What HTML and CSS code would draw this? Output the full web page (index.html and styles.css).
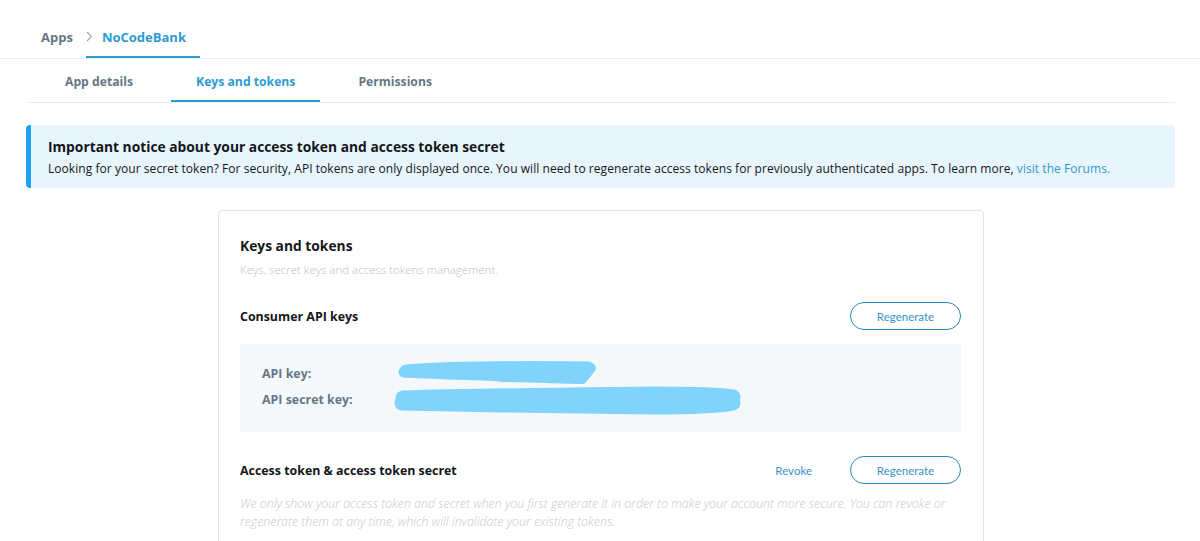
FILE: index.html
```html
<!DOCTYPE html>
<html lang="en">
<head>
<meta charset="utf-8">
<title>Keys and tokens</title>
<link rel="stylesheet" href="styles.css">
</head>
<body>
<header class="topbar">
  <nav class="crumbs">
    <a class="crumb">Apps</a>
    <a class="crumb crumb-active"><span class="chev">
      <svg width="7" height="11" viewBox="0 0 7 11"><path d="M1 1 L5.5 5.5 L1 10" fill="none" stroke="#9aa5ad" stroke-width="1.1"/></svg>
    </span>NoCodeBank</a>
  </nav>
</header>
<main class="main">
  <nav class="tabs">
    <a class="tab">App details</a>
    <a class="tab tab-active">Keys and tokens</a>
    <a class="tab">Permissions</a>
  </nav>

  <section class="notice">
    <h2 class="notice-title">Important notice about your access token and access token secret</h2>
    <p class="notice-text">Looking for your secret token? For security, API tokens are only displayed once. You will need to regenerate access tokens for previously authenticated apps. To learn more, <a class="link">visit the Forums.</a></p>
  </section>

  <section class="card">
    <h3 class="card-title">Keys and tokens</h3>
    <p class="card-sub">Keys, secret keys and access tokens management.</p>

    <div class="row">
      <h4 class="row-title">Consumer API keys</h4>
      <div class="actions">
        <button class="btn">Regenerate</button>
      </div>
    </div>

    <div class="keybox">
      <div class="keyrow">
        <span class="keylabel">API key:</span>
        <svg class="scribble s1" width="210" height="26" viewBox="0 0 210 26">
          <path d="M10 9 C 50 6, 120 5, 192 6" fill="none" stroke="#80d3fb" stroke-width="13" stroke-linecap="round"/>
          <path d="M8 10 C 60 13, 90 12, 104 14" fill="none" stroke="#80d3fb" stroke-width="11" stroke-linecap="round"/>
          <path d="M106 15 C 140 15, 165 17, 186 17 L 195 6" fill="none" stroke="#80d3fb" stroke-width="10" stroke-linecap="round" stroke-linejoin="round"/>
        </svg>
      </div>
      <div class="keyrow">
        <span class="keylabel">API secret key:</span>
        <svg class="scribble s2" width="352" height="28" viewBox="0 0 352 28">
          <path d="M11 12 C 80 10, 180 9, 260 8 C 300 8, 330 9, 341 11" fill="none" stroke="#80d3fb" stroke-width="15" stroke-linecap="round"/>
          <path d="M10 17 C 90 19, 200 20, 260 21 C 300 21, 330 19, 341 17" fill="none" stroke="#80d3fb" stroke-width="15" stroke-linecap="round"/>
        </svg>
      </div>
    </div>

    <div class="row row-access">
      <h4 class="row-title">Access token &amp; access token secret</h4>
      <div class="actions">
        <a class="textbtn">Revoke</a>
        <button class="btn">Regenerate</button>
      </div>
    </div>
    <p class="hint">We only show your access token and secret when you first generate it in order to make your account more secure. You can revoke or regenerate them at any time, which will invalidate your existing tokens.</p>
  </section>
</main>
</body>
</html>
```

FILE: styles.css
```css
* { box-sizing: border-box; }
html, body { margin: 0; padding: 0; background: #fff; }
body {
  font-family: "Open Sans", "Noto Sans", sans-serif;
  color: #14171a;
  overflow: hidden;
  height: 541px;
}
a { text-decoration: none; cursor: pointer; }

.topbar {
  height: 59px;
  border-bottom: 1px solid #e9edf0;
}
.crumbs {
  display: flex;
  align-items: stretch;
  height: 58px;
  padding-left: 41px;
}
.crumb {
  display: flex;
  align-items: center;
  font-size: 13px;
  font-weight: 700;
  color: #657786;
  padding-top: 17px;
  padding-bottom: 2px;
}
.crumb-active {
  margin-left: 13px;
  padding: 17px 14px 0 0;
  color: #2d9bd3;
  border-bottom: 2px solid #2d9bd3;
}
.chev { display: inline-flex; width: 16px; }

.main {
  margin: 0 25px 0 27px;
}
.tabs {
  display: flex;
  gap: 13px;
  padding-left: 13px;
  height: 44px;
  border-bottom: 1px solid #e9edf0;
}
.tab {
  display: flex;
  align-items: center;
  padding: 3px 25px 0;
  font-size: 12.2px;
  font-weight: 700;
  color: #657786;
  border-bottom: 2px solid transparent;
}
.tab-active {
  color: #2d9bd3;
  border-bottom-color: #2d9bd3;
}

.notice {
  margin: 22px 0 0 -1px;
  background: #e8f5fd;
  border-left: 5px solid #1da1f2;
  border-radius: 4px;
  padding: 12px 20px 8px 17px;
  height: 63px;
}
.notice-title {
  margin: 0;
  font-size: 13.8px;
  font-weight: 700;
  line-height: 20px;
  color: #14171a;
}
.notice-text {
  margin: 2px 0 0;
  font-size: 12px;
  letter-spacing: 0.055px;
  line-height: 20px;
  color: #14171a;
}
.link { color: #2f9bcb; }

.card {
  width: 766px;
  margin: 22px auto 0;
  border: 1px solid #dfe3e6;
  border-radius: 4px;
  padding: 25px 22px 30px 21px;
  min-height: 360px;
}
.card-title {
  margin: 0;
  font-size: 13.8px;
  font-weight: 700;
  line-height: 20px;
}
.card-sub {
  margin: 5px 0 0;
  font-size: 11.5px;
  line-height: 18px;
  color: #b8c1c8;
  font-weight: 300;
}
.row {
  display: flex;
  align-items: center;
  justify-content: space-between;
  margin-top: 23px;
  height: 28px;
}
.row-title {
  margin: 0;
  font-size: 12.4px;
  font-weight: 700;
}
.actions {
  display: flex;
  align-items: center;
  gap: 38px;
}
.btn {
  width: 111px;
  height: 28px;
  border: 1px solid #2a88b8;
  border-radius: 14px;
  background: #fff;
  color: #3a92c4;
  font-family: "Lato", "Open Sans", sans-serif;
  font-size: 11.5px;
  padding: 0;
}
.textbtn {
  font-family: "Lato", "Open Sans", sans-serif;
  font-size: 11.5px;
  color: #3a92c4;
}

.keybox {
  margin-top: 14px;
  background: #f5f8fa;
  height: 88px;
  padding: 16px 22px 0;
}
.keyrow {
  display: flex;
  align-items: center;
  height: 26px;
}
.keylabel {
  width: 136px;
  font-size: 12.4px;
  font-weight: 700;
  color: #657786;
}
.scribble { display: block; overflow: visible; }
.s1 { margin-left: -2px; margin-top: 3px; }
.s2 { margin-left: -6px; margin-top: 1px; }

.row-access { margin-top: 24px; }
.hint {
  margin: 11px 0 0;
  font-size: 12.4px;
  line-height: 18px;
  font-style: italic;
  font-weight: 300;
  color: #c3cbd1;
}
```
